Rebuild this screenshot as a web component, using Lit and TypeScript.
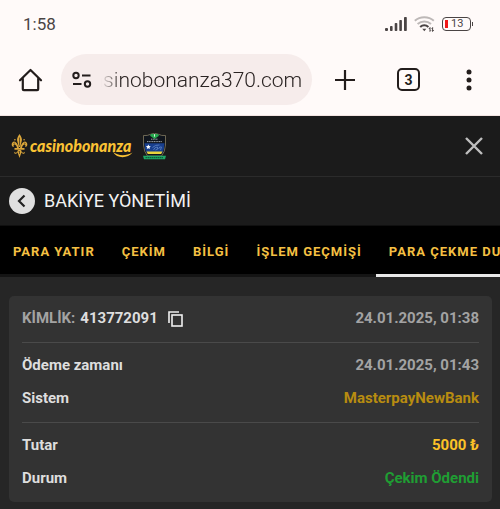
import { LitElement, html, css, svg } from "lit";
import { customElement, property, query } from "lit/decorators.js";
import { classMap } from "lit/directives/class-map.js";

@customElement("status-bar")
class StatusBar extends LitElement {
  static styles = css`
    :host {
      display: flex;
      align-items: center;
      justify-content: space-between;
      height: 48px;
      padding: 0 27px 0 23px;
      color: #4a4444;
      font-size: 17px;
      line-height: 20px;
    }
    .icons {
      display: flex;
      align-items: center;
      gap: 7px;
    }
    svg {
      display: block;
    }
    .battery {
      display: flex;
      align-items: center;
      gap: 1px;
    }
    .cell {
      box-sizing: border-box;
      display: flex;
      align-items: center;
      gap: 3px;
      width: 29px;
      height: 14px;
      padding: 0 2px;
      border: 1px solid #4a4444;
      border-radius: 4px;
      font-size: 11px;
      line-height: 12px;
    }
    .level {
      width: 3px;
      height: 8px;
      background: #f01818;
    }
    .tip {
      width: 1px;
      height: 4px;
      background: #4a4444;
    }
  `;

  render() {
    return html`
      <span>1:58</span>
      <div class="icons">
        <svg width="22" height="14" viewBox="0 0 22 14" fill="#4a4444">
          <rect x="0" y="11" width="3" height="3" rx="1" />
          <rect x="5" y="9" width="2.6" height="5" rx=".8" />
          <rect x="9.7" y="6" width="2.6" height="8" rx=".8" />
          <rect x="14.3" y="3" width="2.6" height="11" rx=".8" />
          <rect x="19" y="0" width="2.8" height="14" rx=".8" />
        </svg>
        <svg width="21" height="16" viewBox="0 0 21 16" fill="none">
          <path d="M.8 4.8C6 .1 14.600 .1 19.800 4.800" stroke="#bdb8b7" stroke-width="2" />
          <path d="M3.600 8.100C7.500 4.700 13.200 4.700 17 8.100" stroke="#bdb8b7" stroke-width="2" />
          <path d="M6.200 11C8.600 8.900 12 8.900 14.400 11" stroke="#4a4444" stroke-width="2.200" />
          <path d="M8.300 12.800h4L10.300 15.300z" fill="#4a4444" />
          <path d="M16 11.500v4M18.600 11.500v4M14.900 13l1.100-1.400M19.700 14l-1.100 1.400M16 15.300l1-1M18.600 11.600l-1 1" stroke="#4a4444" stroke-width="1" />
        </svg>
        <div class="battery">
          <div class="cell"><span class="level"></span><span>13</span></div>
          <span class="tip"></span>
        </div>
      </div>
    `;
  }
}

@customElement("browser-bar")
class BrowserBar extends LitElement {
  @query("input") field!: HTMLInputElement;

  static styles = css`
    :host {
      display: flex;
      align-items: center;
      height: 68px;
      padding: 0 16px 4px 18px;
      box-sizing: border-box;
      border-bottom: 1px solid #f3e4e2;
      color: #231d1c;
    }
    button {
      display: flex;
      align-items: center;
      justify-content: center;
      flex: none;
      padding: 0;
      border: 0;
      background: none;
      color: inherit;
      font: inherit;
    }
    svg {
      display: block;
    }
    .address {
      display: flex;
      align-items: center;
      flex: 1;
      min-width: 0;
      height: 51px;
      margin: 0 22px 0 18px;
      padding: 0 10px;
      gap: 9px;
      box-sizing: border-box;
      border-radius: 26px;
      background: #f6eceb;
    }
    .field {
      flex: 1;
      min-width: 0;
      mask-image: linear-gradient(to right, transparent, #000 20px);
    }
    input {
      display: block;
      width: 100%;
      padding: 0;
      border: 0;
      outline: 0;
      background: none;
      color: #2b2423;
      font: 300 21px/28px Roboto, sans-serif;
    }
    .tabs {
      width: 23px;
      height: 23px;
      margin: 0 34px 0 41px;
      box-sizing: border-box;
      border: 2px solid currentColor;
      border-radius: 5px;
      font-weight: 700;
      font-size: 14px;
      line-height: 16px;
    }
  `;

  firstUpdated() {
    this.showEnd();
    document.fonts.ready.then(() => this.showEnd());
  }

  // The end of the address, where the domain is, stays in view.
  private showEnd() {
    this.field.scrollLeft = this.field.scrollWidth;
  }

  render() {
    return html`
      <button aria-label="Ana sayfa">
        <svg width="25" height="24" viewBox="0 0 25 24" fill="none" stroke="currentColor" stroke-width="2.200" stroke-linejoin="round" stroke-linecap="round">
          <path d="M2 12.300 12.500 2 23 12.300M4.800 10.500V21.200q0 1 1 1H19.200q1 0 1-1V10.500" />
        </svg>
      </button>
      <div class="address">
        <button aria-label="Site bilgileri">
          <svg width="21" height="18" viewBox="0 0 21 18" fill="none" stroke="currentColor" stroke-width="2">
            <circle cx="5" cy="4.500" r="2.700" />
            <path d="M11 4.500h8.500M2 13h8.500" />
            <circle cx="16.500" cy="13" r="2.700" />
          </svg>
        </button>
        <div class="field">
          <input type="text" aria-label="Adres" .value=${"casinobonanza370.com"} />
        </div>
      </div>
      <button aria-label="Yeni sekme">
        <svg width="22" height="22" viewBox="0 0 22 22" stroke="currentColor" stroke-width="2.200">
          <path d="M11 1v20M1 11h20" />
        </svg>
      </button>
      <button class="tabs" aria-label="Sekmeler">3</button>
      <button aria-label="Menü">
        <svg width="30" height="22" viewBox="0 0 30 22" fill="currentColor">
          <circle cx="15" cy="3" r="2.500" />
          <circle cx="15" cy="11" r="2.500" />
          <circle cx="15" cy="19" r="2.500" />
        </svg>
      </button>
    `;
  }
}

@customElement("site-header")
class SiteHeader extends LitElement {
  static styles = css`
    :host {
      display: flex;
      align-items: center;
      height: 61px;
      padding: 0 16px 0 11px;
      box-sizing: border-box;
      border-bottom: 1px solid #2b2b2b;
      background: #1b1b1b;
    }
    svg {
      display: block;
      flex: none;
    }
    .brand {
      display: flex;
      align-items: center;
      gap: 2px;
      color: #fac234;
      text-decoration: none;
    }
    .name {
      position: relative;
      font: italic 900 16px/24px Lato, sans-serif;
    }
    .smile {
      position: absolute;
      right: -2px;
      bottom: 0;
    }
    .seal {
      margin-left: 11px;
    }
    button {
      margin-left: auto;
      padding: 0;
      border: 0;
      background: none;
    }
  `;

  render() {
    return html`
      <a class="brand" href="#">
        <svg width="17" height="24" viewBox="0 0 17 24" fill="#dba63a">
          <path d="M8.500 0C6.300 3 5.400 5.400 6.500 8.100L7.700 13H9.300L10.500 8.100C11.600 5.400 10.700 3 8.500 0z" />
          <path d="M8 14C6.700 8.700 3.500 6.400 1.600 8.200-.1 10 .7 13 3 12.800 2 11.300 3 10 4.200 10.800 5.600 11.800 5.800 13 6 14zM9 14C10.300 8.700 13.500 6.400 15.400 8.200 17.100 10 16.300 13 14 12.800 15 11.300 14 10 12.800 10.800 11.400 11.800 11.200 13 11 14z" />
          <path d="M3.500 14h10v1.700h-10zM7.400 16h2.200l.6 3-1.700 5-1.700-5zM6.900 16C6.500 18.500 4.600 19.600 3.200 17.700 2.800 19.800 5.500 21.300 7.600 17zM10.100 16C10.500 18.500 12.400 19.600 13.800 17.700 14.200 19.800 11.500 21.300 9.400 17z" />
          <path d="M8.500 3.500v8M2.500 9.500l1.500-.5M14.500 9.500L13 9M8.500 17v3" stroke="#1b1b1b" stroke-width=".6" />
          <circle cx="3.900" cy="5.700" r=".8" /><circle cx="13.100" cy="5.700" r=".8" />
        </svg>
        <span class="name">casinobonanza
          <svg class="smile" width="20" height="6" viewBox="0 0 20 6" fill="#fac234">
            <path d="M0 0C5 4 13 4.200 19.500.5 15 6.500 4 7 0 0z" />
          </svg>
        </span>
      </a>
      <svg class="seal" width="25" height="27" viewBox="0 0 24 27">
        <path d="M1 2.500Q5 3 8 1.300L12 .2 16 1.300Q19 3 23 2.500V12Q22.500 19 19 23H5Q1.500 19 1 12z" fill="#10151d" stroke="#77705a" stroke-width=".9" />
        <path d="M8.500 1h7l1 1.800-4.500 3.200-4.500-3.200z" fill="#26a84e" />
        <path d="M12 1.200v2.500" stroke="#d7f5df" stroke-width="1" />
        <path d="M8.500 6.200h7M4.500 8.600h15" stroke="#9ca3ab" stroke-width="1" stroke-dasharray="1.200 .5" />
        <path d="M2 10.200H22Q22 16 19.800 20H4.200Q2 16 2 10.200z" fill="#183f8e" />
        <path d="M4 18.600H20L18.700 21H5.300z" fill="#e9d33b" />
        <path d="M5.800 11.500l.8 1.600 1.700.1-1.300 1.200.4 1.700-1.600-.9-1.500.9.400-1.700-1.300-1.200 1.700-.1z" fill="#fff" />
        <path d="M10 14.500q3-3 7-2.500M11 17q1-3 4-3 1 3-2 3M16 16q1-3 3-2l-1 3" fill="none" stroke="#5a7fc0" stroke-width=".9" />
        <path d="M.5 22.800h23l-1 3.500h-21z" fill="#1fa866" />
        <path d="M3 24.600h18" stroke="#0c5635" stroke-width="1.200" stroke-dasharray="1.400 .6" />
      </svg>
      <button aria-label="Kapat">
        <svg width="20" height="20" viewBox="0 0 20 20" stroke="#bfbfbf" stroke-width="2.400">
          <path d="M2 2l16 16M18 2 2 18" />
        </svg>
      </button>
    `;
  }
}

@customElement("section-tabs")
class SectionTabs extends LitElement {
  @property({ type: Array }) items: string[] = [];
  @property({ type: Number }) active = 0;

  static styles = css`
    :host {
      display: flex;
      overflow: hidden;
      height: 52px;
      box-sizing: border-box;
      border-top: 1px solid #101010;
      background: linear-gradient(#000 48px, #141414 48px);
    }
    .tab {
      flex: none;
      padding: 3px 14px 0 13px;
      border: 0;
      border-bottom: 3px solid transparent;
      background: none;
      color: #f5c043;
      font: 700 13px/16px Roboto, sans-serif;
      letter-spacing: 1px;
      white-space: nowrap;
    }
    .active {
      border-bottom-color: #e8e8e8;
    }
  `;

  render() {
    return this.items.map(
      (item, i) => html`<button class=${classMap({ tab: true, active: i === this.active })}>${item}</button>`
    );
  }
}

const copyIcon = svg`<path d="M1 12V1h10" /><rect x="4" y="4" width="10" height="11" />`;

@customElement("payment-card")
class PaymentCard extends LitElement {
  static styles = css`
    :host {
      display: block;
      padding: 6px 13px 7px;
      border-radius: 5px;
      background: #333;
      color: #dedede;
      font-weight: 700;
      font-size: 15px;
      line-height: 33px;
    }
    .group {
      padding: 6px 0 7px;
      border-top: 1px solid #4a4a4a;
    }
    .group:first-child {
      padding-top: 0;
      border-top: 0;
    }
    .group:last-child {
      padding-bottom: 0;
    }
    .row {
      display: flex;
      align-items: center;
      justify-content: space-between;
    }
    .id {
      display: flex;
      align-items: center;
      gap: 5px;
    }
    .muted {
      color: #a3a3a3;
    }
    .bank {
      color: #b88c10;
    }
    .amount {
      color: #fcc227;
    }
    .done {
      color: #1f9e33;
    }
    button {
      display: flex;
      margin-left: 5px;
      padding: 0;
      border: 0;
      background: none;
    }
  `;

  render() {
    return html`
      <div class="group">
        <div class="row">
          <div class="id">
            <span class="muted">KİMLİK:</span>
            <span>413772091</span>
            <button aria-label="Kopyala">
              <svg width="15" height="16" viewBox="0 0 15 16" fill="none" stroke="#f0f0f0" stroke-width="1.600">${copyIcon}</svg>
            </button>
          </div>
          <span class="muted">24.01.2025, 01:38</span>
        </div>
      </div>
      <div class="group">
        <div class="row"><span>Ödeme zamanı</span><span class="muted">24.01.2025, 01:43</span></div>
        <div class="row"><span>Sistem</span><span class="bank">MasterpayNewBank</span></div>
      </div>
      <div class="group">
        <div class="row"><span>Tutar</span><span class="amount">5000 ₺</span></div>
        <div class="row"><span>Durum</span><span class="done">Çekim Ödendi</span></div>
      </div>
    `;
  }
}

@customElement("app-root")
class AppRoot extends LitElement {
  static styles = css`
    :host {
      display: flex;
      flex-direction: column;
      min-height: 100vh;
      background: #262626;
      font-family: Roboto, sans-serif;
    }
    .chrome {
      background: #fffaf9;
    }
    .title {
      display: flex;
      align-items: center;
      gap: 9px;
      height: 48px;
      padding: 0 9px;
      background: #1b1b1b;
      color: #f2f2f2;
    }
    h1 {
      margin: 0;
      font-weight: 400;
      font-size: 18px;
      line-height: 24px;
    }
    .back {
      display: flex;
      padding: 0;
      border: 0;
      border-radius: 50%;
      background: #e0e0e0;
    }
    main {
      padding: 19px 8px 7px 9px;
    }
  `;

  render() {
    return html`
      <div class="chrome">
        <status-bar></status-bar>
        <browser-bar></browser-bar>
      </div>
      <site-header></site-header>
      <div class="title">
        <button class="back" aria-label="Geri">
          <svg width="26" height="26" viewBox="0 0 26 26" fill="none" stroke="#222" stroke-width="2.200">
            <path d="M15.500 7.500 10 13l5.500 5.500" />
          </svg>
        </button>
        <h1>BAKİYE YÖNETİMİ</h1>
      </div>
      <section-tabs
        .items=${["PARA YATIR", "ÇEKİM", "BİLGİ", "İŞLEM GEÇMİŞİ", "PARA ÇEKME DURUMU"]}
        .active=${4}
      ></section-tabs>
      <main><payment-card></payment-card></main>
    `;
  }
}
